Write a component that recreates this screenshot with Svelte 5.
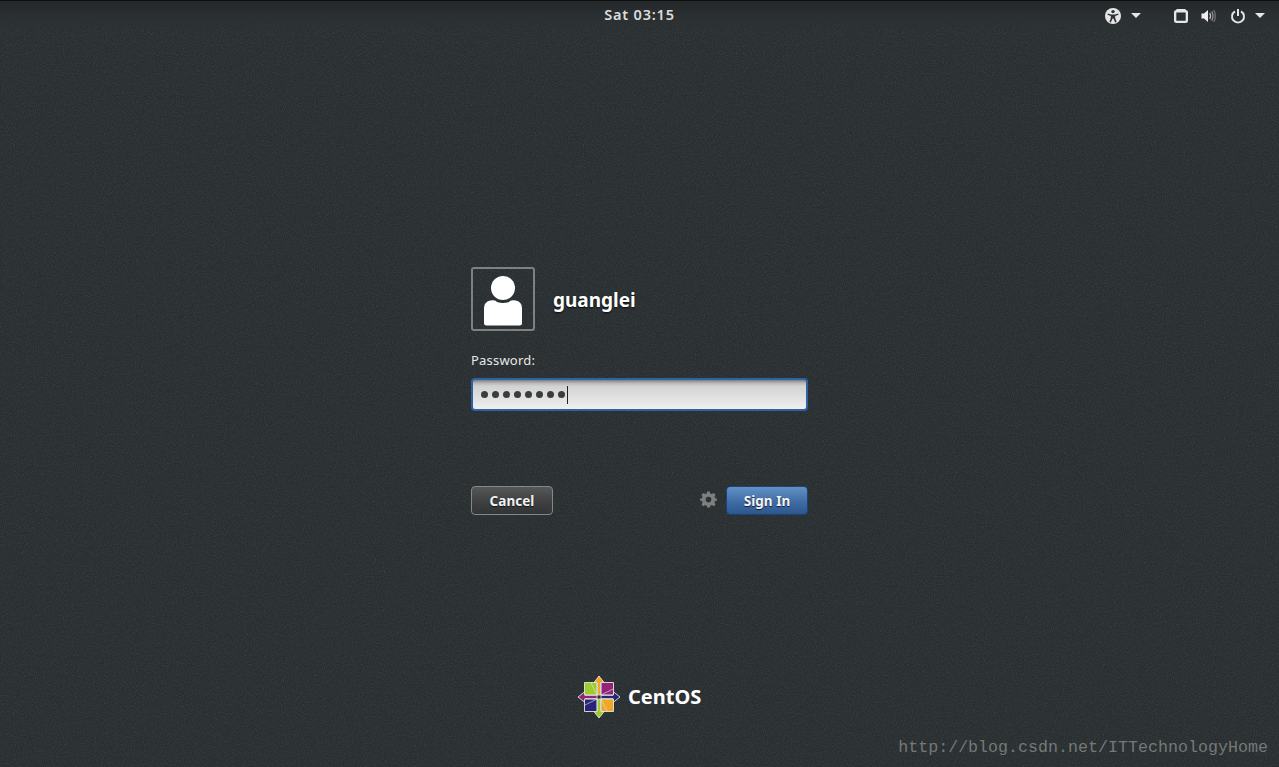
<script>
  const dots = Array.from({ length: 8 });
</script>

<div class="screen">
  <svg class="noise" width="1279" height="767" aria-hidden="true">
    <filter id="grain" x="0" y="0" width="100%" height="100%">
      <feTurbulence type="fractalNoise" baseFrequency="0.9" numOctaves="2" seed="4" />
      <feColorMatrix type="matrix" values="0 0 0 0 1  0 0 0 0 1  0 0 0 0 1  0.6 0.6 0 0 -0.5" />
    </filter>
    <rect width="1279" height="767" filter="url(#grain)" opacity="0.18" />
  </svg>

  <header class="topbar">
    <div class="side"></div>
    <div class="clock">Sat 03:15</div>
    <div class="side tray">
      <svg class="a11y" width="18" height="18" viewBox="0 0 18 18">
        <circle cx="9" cy="9" r="8" fill="#e6e6e6" />
        <circle cx="9" cy="4.6" r="1.7" fill="#2e3436" />
        <path d="M3.8 6.6 L7 7.6 H11 L14.2 6.6 L14.5 7.8 L11.2 9 V11 L12.6 15 L11.2 15.4 L9.4 11.6 H8.6 L6.8 15.4 L5.4 15 L6.8 11 V9 L3.5 7.8 Z" fill="#2e3436" />
      </svg>
      <span class="caret first"></span>
      <svg class="net" width="14" height="14" viewBox="1 1 12 12">
        <path d="M3.5 1 H10.5 L11.5 2 Q13 2 13 3.5 V11 Q13 13 11 13 H3 Q1 13 1 11 V3.5 Q1 2 2.5 2 Z M3 4 V11 H11 V4 Z" fill="#e6e6e6" fill-rule="evenodd" />
      </svg>
      <svg class="vol" width="16" height="16" viewBox="0 0 16 16">
        <path d="M0.5 5.5 H3 L7 2 V14 L3 10.5 H0.5 Z" fill="#eeeeee" />
        <path d="M8.8 5 Q10.4 8 8.8 11" fill="none" stroke="#c4c4c4" stroke-width="1.4" />
        <path d="M10.8 3.4 Q13.2 8 10.8 12.6" fill="none" stroke="#8e8e8e" stroke-width="1.4" />
        <path d="M12.8 2 Q15.9 8 12.8 14" fill="none" stroke="#6c6c6c" stroke-width="1.4" />
      </svg>
      <svg class="power" width="16" height="16" viewBox="0 0 16 16">
        <path d="M5 3.4 A6 6 0 1 0 11 3.4" fill="none" stroke="#e6e6e6" stroke-width="1.9" />
        <path d="M8 1 V8" stroke="#e6e6e6" stroke-width="2" />
      </svg>
      <span class="caret"></span>
    </div>
  </header>

  <main class="login">
    <div class="user">
      <div class="avatar">
        <svg width="40" height="52" viewBox="0 0 40 52">
          <circle cx="20" cy="13" r="12" fill="#fff" />
          <path d="M1 33 Q1 27 7 25.5 Q13 24.5 14 27 Q20 29 26 27 Q27 24.5 33 25.5 Q39 27 39 33 V48 Q39 50.5 36.5 50.5 H3.5 Q1 50.5 1 48 Z" fill="#fff" />
        </svg>
      </div>
      <div class="name">guanglei</div>
    </div>
    <label class="prompt" for="pw">Password:</label>
    <div class="entry" id="pw">
      {#each dots as _}<span class="dot"></span>{/each}<span class="cursor"></span>
    </div>
    <div class="actions">
      <button class="btn cancel">Cancel</button>
      <div class="right">
        <svg class="gear" width="17" height="17" viewBox="0 0.8 18 17.2">
          <path d="M7.6 0.8 H10.4 L10.9 3 L12.6 3.7 L14.5 2.5 L16.5 4.5 L15.3 6.4 L16 8 L18 8.5 V10.5 L16 11 L15.3 12.7 L16.5 14.6 L14.5 16.5 L12.6 15.3 L10.9 16 L10.4 18 H7.6 L7.1 16 L5.4 15.3 L3.5 16.5 L1.5 14.6 L2.7 12.7 L2 11 L0 10.5 V8.5 L2 8 L2.7 6.4 L1.5 4.5 L3.5 2.5 L5.4 3.7 L7.1 3 Z M9 6.4 A3 3 0 1 0 9 12.4 A3 3 0 1 0 9 6.4 Z" fill="#7d7f7f" fill-rule="evenodd" />
        </svg>
        <button class="btn signin">Sign In</button>
      </div>
    </div>
  </main>

  <footer class="brand">
    <svg width="44" height="44" viewBox="-22 -22 44 44">
      <g stroke="#e4e4e4" stroke-width="0.9" stroke-linejoin="miter">
        <path d="M-1.7 -1 V-14 H-5.5 L0 -21 L5.5 -14 H1.7 V-1 Z" fill="#efa724" />
        <path d="M1 -1.7 H14 V-5.5 L21 0 L14 5.5 V1.7 H1 Z" fill="#262577" />
        <path d="M1.7 1 V14 H5.5 L0 21 L-5.5 14 H-1.7 V1 Z" fill="#9ccd2a" />
        <path d="M-1 1.7 H-14 V5.5 L-21 0 L-14 -5.5 V-1.7 H-1 Z" fill="#932279" />
        <path d="M-2.1 -2.1 V-14.5 H-14.5 V-2.1 Z" fill="#9ccd2a" />
        <path d="M2.1 -2.1 V-14.5 H14.5 V-2.1 Z" fill="#932279" />
        <path d="M2.1 2.1 V14.5 H14.5 V2.1 Z" fill="#efa724" />
        <path d="M-2.1 2.1 V14.5 H-14.5 V2.1 Z" fill="#262577" />
      </g>
      <g stroke="#e4e4e4" stroke-width="0.8" fill="none" opacity="0.8">
        <path d="M-2 -2 L-8 -14" />
        <path d="M2 -2 L14 -8" />
        <path d="M2 2 L8 14" />
        <path d="M-2 2 L-14 8" />
      </g>
      <rect x="-2" y="-2" width="4" height="4" fill="#2e3436" stroke="#e4e4e4" stroke-width="0.8" />
    </svg>
    <span class="word">CentOS</span>
  </footer>

  <div class="watermark">http://blog.csdn.net/ITTechnologyHome</div>
</div>

<style>
  :global(body) {
    margin: 0;
    background: #292e30;
  }
  .screen {
    position: relative;
    width: 1279px;
    height: 767px;
    overflow: hidden;
    display: flex;
    flex-direction: column;
    background: #292e30;
    color: #eeeeec;
    font-family: "Noto Sans", "Open Sans", sans-serif;
  }
  .noise {
    position: absolute;
    inset: 0;
    pointer-events: none;
  }
  .topbar,
  .login {
    position: relative;
  }
  .topbar {
    height: 29px;
    flex: none;
    display: grid;
    grid-template-columns: 1fr auto 1fr;
    align-items: center;
    border-top: 1px solid #0c0d0d;
    background: linear-gradient(#24282a, #2b3032 60%, rgba(46, 52, 54, 0));
  }
  .clock {
    font-size: 14.5px;
    font-weight: 600;
    color: #dcdcdc;
    letter-spacing: 0.8px;
    padding-bottom: 3px;
  }
  .tray {
    display: flex;
    align-items: center;
    justify-content: flex-end;
    padding-right: 14px;
  }
  .caret {
    width: 0;
    height: 0;
    border-left: 5px solid transparent;
    border-right: 5px solid transparent;
    border-top: 5px solid #e6e6e6;
    margin-left: 9px;
  }
  .caret.first {
    margin-right: 33px;
  }
  .net,
  .vol {
    margin-right: 13px;
  }
  .login {
    width: 337px;
    margin: 237px 0 0 471px;
    display: flex;
    flex-direction: column;
  }
  .user {
    display: flex;
    align-items: center;
    gap: 18px;
  }
  .avatar {
    border: 2px solid #80817f;
    border-radius: 3px;
    display: flex;
    align-items: flex-end;
    justify-content: center;
    padding-bottom: 2px;
    box-sizing: content-box;
    width: 60px;
    height: 58px;
  }
  .name {
    font-size: 19px;
    font-weight: 700;
    color: #fff;
    padding-top: 2px;
    text-shadow: 0 1px 2px rgba(0, 0, 0, 0.8);
  }
  .prompt {
    margin-top: 19px;
    height: 20px;
    line-height: 20px;
    font-size: 13px;
    letter-spacing: 0.2px;
    color: #e8e8e6;
  }
  .entry {
    margin-top: 8px;
    height: 29px;
    border: 2px solid #2f62a5;
    border-radius: 4px;
    background: linear-gradient(#7e7e7e 0, #b6b6b6 3px, #d2d2d2 6px, #f0f0f0 100%);
    display: flex;
    align-items: center;
    padding-left: 8px;
    gap: 4px;
  }
  .dot {
    width: 7px;
    height: 7px;
    border-radius: 50%;
    background: #3a3d3e;
  }
  .cursor {
    width: 1px;
    height: 18px;
    background: #222;
    margin-left: -2px;
  }
  .actions {
    margin-top: 75px;
    display: flex;
    justify-content: space-between;
    align-items: center;
  }
  .right {
    display: flex;
    align-items: center;
    gap: 9px;
  }
  .gear {
    display: block;
    margin-bottom: 2px;
  }
  .btn {
    height: 29px;
    width: 82px;
    padding: 0;
    border-radius: 4px;
    font-family: inherit;
    font-size: 13.5px;
    font-weight: 700;
    color: #f2f2f2;
    letter-spacing: 0.05px;
    text-shadow: 0 1px 1px rgba(0, 0, 0, 0.7);
    box-sizing: border-box;
  }
  .cancel {
    border: 1px solid #85878a;
    background: linear-gradient(#555857, #3c3e3f 60%, #323536);
  }
  .signin {
    border: 1px solid #1d4279;
    background: linear-gradient(#6391c4, #3f6ca4 55%, #2d568f);
  }
  .brand {
    position: absolute;
    left: 577px;
    top: 675px;
    display: flex;
    align-items: center;
    gap: 7px;
  }
  .word {
    font-size: 20px;
    font-weight: 700;
    color: #fff;
    line-height: 44px;
    margin-top: -1px;
  }
  .watermark {
    position: absolute;
    right: 11px;
    bottom: 8px;
    font-family: "Liberation Mono", monospace;
    font-size: 16.67px;
    color: #747978;
    line-height: 22px;
  }
</style>
